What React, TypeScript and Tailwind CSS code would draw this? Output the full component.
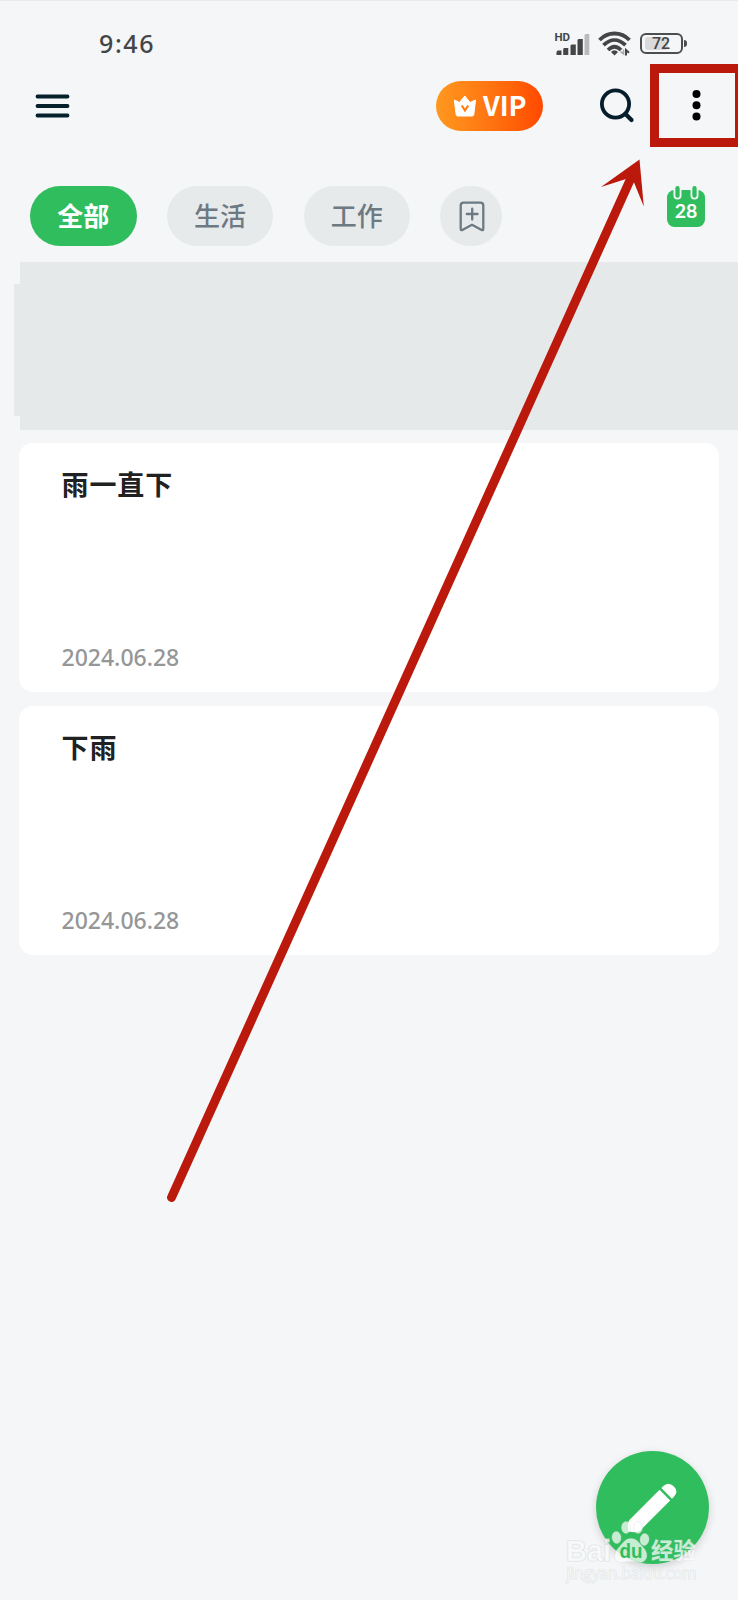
interface Note {
  title: string;
  date: string;
}

const notes: Note[] = [
  { title: '雨一直下', date: '2024.06.28' },
  { title: '下雨', date: '2024.06.28' },
];

const categories = ['全部', '生活', '工作'];

function StatusBar() {
  return (
    <div className="flex h-[64px] items-start justify-between border-t border-[#e8eaec] pl-[99px] pr-[51.5px] text-[#444546]">
      <span className="mt-[24px] text-[25px] font-medium leading-[36px] tracking-[1.6px]">9:46</span>
      <div className="mt-[29px] flex items-start">
        <svg width="36" height="26" viewBox="0 0 36 26" fill="currentColor">
          <text x="0.500" y="11" fontSize="11.5" fontWeight="700" fontFamily="Roboto">HD</text>
          <path d="M3.500 20.500h4V25h-5v-3zM10 18h4.300v7H9.200v-6zM17.500 14.500h4.300V25h-5.300v-9.500zM24.500 9h4.300v16h-5.300V10z" />
          <path d="M31.500 4h3.800v21h-4.800V5z" fill="#b9bbbd" />
        </svg>
        <svg width="34" height="26" viewBox="0 0 34 26" fill="none" stroke="currentColor" className="ml-[8px]">
          <path d="M1.500 10C10 1.300 23 1.300 31.500 10" strokeWidth="3.800" />
          <path d="M5.500 15.200C12.500 8.300 20.500 8.300 27.500 15.200" strokeWidth="3.800" />
          <path d="M10 20C14.500 15.500 18.500 15.500 23 20" strokeWidth="3.600" />
          <path d="M13 22Q16.500 18.700 20 22L16.500 25.500Z" fill="currentColor" stroke="none" />
          <path d="M25.500 19.500v4.500l-3-2.300" stroke="#a9abad" strokeWidth="1.600" />
          <path d="M28 25.500v-5.500l3 2.700" strokeWidth="2" />
        </svg>
        <div className="ml-[8px] mt-[3px] flex items-center">
          <div className="relative flex h-[21px] w-[43px] items-center justify-center rounded-[6px] border-2 border-[#4d4e50]">
            <div className="absolute inset-y-[2px] left-[3px] w-[23px] rounded-[3px] bg-[#d9dadb]" />
            <span className="relative font-[Roboto] text-[16px] font-medium leading-none">72</span>
          </div>
          <div className="ml-px h-[7px] w-[3px] rounded-r-sm bg-[#4d4e50]" />
        </div>
      </div>
    </div>
  );
}

function Toolbar() {
  return (
    <div className="flex h-[83px] items-center pl-[35px] pr-[37px]">
      <svg width="35" height="24" viewBox="0 0 35 24" stroke="#06202c" strokeWidth="3.800" strokeLinecap="round">
        <path d="M2.500 2.500h30M2.500 12h30M2.500 21.500h30" />
      </svg>
      <div className="ml-[366px] flex h-[50px] w-[107px] items-center rounded-full bg-linear-to-r from-[#ff981e] to-[#ff4800] pl-[17px]">
        <svg width="24" height="22" viewBox="0 0 24 22">
          <path d="M1.300 5L6.500 7.500L11.800 1L17 7.500L22.500 5L20.800 19.500Q20.600 21 19.100 21H4.900Q3.400 21 3.200 19.500Z" fill="#fff" stroke="#fff" strokeLinejoin="round" />
          <path d="M8.800 10.500L12 15.500L15.200 10.500" fill="none" stroke="#ff7c14" strokeWidth="2.200" />
        </svg>
        <span className="ml-[6px] pb-[3px] font-['Noto_Sans_CJK_SC'] text-[27px] font-bold leading-none text-white">VIP</span>
      </div>
      <svg width="37" height="36" viewBox="0 0 37 36" fill="none" stroke="#061d2b" strokeWidth="3.800" strokeLinecap="round" className="ml-[56px]">
        <circle cx="16.500" cy="16" r="13.600" />
        <path d="M26.500 26l6 6" strokeWidth="4.200" />
      </svg>
      <svg width="10" height="34" viewBox="0 0 10 34" className="ml-auto">
        <circle cx="5.500" cy="5" r="4" />
        <circle cx="5.500" cy="16.300" r="4" />
        <circle cx="5.500" cy="27.500" r="4" />
      </svg>
    </div>
  );
}

function Categories() {
  return (
    <div className="mt-[39px] flex h-[60px] items-start gap-[30.3px] pl-[30px] pr-[33px]">
      {categories.map((name, i) => (
        <div
          key={name}
          className={`flex h-[60px] w-[106.5px] items-center justify-center rounded-full pt-px text-[26px] ${
            i === 0 ? 'bg-[#30bd5e] font-bold text-white' : 'bg-[#e7eaeb] font-medium text-[#6d7983]'
          }`}
        >
          {name}
        </div>
      ))}
      <div className="flex h-[60px] w-[62px] items-center justify-center rounded-full bg-[#e7eaeb]">
        <svg width="26" height="31" viewBox="0 0 26 31" fill="none" stroke="#6d7983" strokeWidth="2.300" strokeLinecap="round" strokeLinejoin="round" className="ml-px">
          <path d="M4.500 1.700h17Q24.300 1.700 24.300 4.500v23.300Q24.300 30 22.200 28.800L13 23.800L3.800 28.800Q1.700 30 1.700 27.800V4.500Q1.700 1.700 4.500 1.700Z" />
          <path d="M7.800 13h10.800M13.200 7.700v10.800" />
        </svg>
      </div>
      <svg width="38" height="42" viewBox="0 0 38 42" className="ml-auto">
        <rect y="4" width="38" height="37" rx="7.500" fill="#30bd5e" />
        <path d="M10.500 1.500v8M27.500 1.500v8" stroke="#f4f6f8" strokeWidth="8" strokeLinecap="round" />
        <path d="M10.500 2.200v7.500M27.500 2.200v7.500" stroke="#30bd5e" strokeWidth="4.300" strokeLinecap="round" />
        <text x="19" y="32" textAnchor="middle" fontFamily="Lato" fontSize="19.500" fontWeight="700" fill="#fff">28</text>
      </svg>
    </div>
  );
}

function NoteCard({ title, date }: Note) {
  return (
    <div className="flex h-[249px] flex-col justify-between rounded-[14px] bg-white pb-[20px] pl-[42.5px] pt-[24px]">
      <div className="text-[27px] font-bold leading-[36px] tracking-[0.9px] text-[#202122]">{title}</div>
      <div className="text-[23px] font-medium leading-[30px] text-[#959697]">{date}</div>
    </div>
  );
}

function EditButton() {
  return (
    <div className="absolute left-[596px] top-[1451px] flex h-[113px] w-[113px] items-center justify-center rounded-full bg-[#30bd5e] shadow-[0_3px_9px_rgba(0,0,0,0.16)]">
      <svg width="113" height="113" viewBox="0 0 113 113">
        <g transform="translate(56.5 56.5) rotate(45)" fill="#fff">
          <path d="M-7.500-17.500H7.500V24.500Q7.500 28 4.500 30.500L0 34L-4.500 30.500Q-7.500 28-7.500 24.500Z" />
          <path d="M-7.500-20V-22.500Q-7.500-30 0-30Q7.500-30 7.500-22.500V-20Z" />
        </g>
      </svg>
    </div>
  );
}

function Watermark() {
  return (
    <svg width="142" height="70" viewBox="0 0 142 70" className="absolute left-[562px] top-[1518px]">
      <g fontFamily="'Liberation Sans', 'Noto Sans CJK SC', sans-serif" fontWeight="700">
        <g fill="#fafbfb" fillOpacity="0.75" stroke="#d3d6d8" strokeOpacity="0.7" strokeWidth="1.200" paintOrder="stroke">
          <text x="4" y="43" fontSize="29" textLength="45" lengthAdjust="spacingAndGlyphs">Bai</text>
          <text x="89" y="41" fontSize="22.500" textLength="45" strokeOpacity="0.2">经验</text>
          <text x="4.500" y="60.500" fontSize="16" fontWeight="400" fontFamily="'Open Sans', sans-serif" textLength="130" lengthAdjust="spacingAndGlyphs" strokeWidth="0.900">jingyan.baidu.com</text>
        </g>
        <g fill="#fff" fillOpacity="0.72" stroke="#d3d6d8" strokeOpacity="0.5" strokeWidth="0.700">
          <ellipse cx="54.500" cy="19.500" rx="4.500" ry="6" transform="rotate(-8 54.500 19.500)" />
          <ellipse cx="64" cy="9.500" rx="4.500" ry="6" />
          <ellipse cx="76" cy="9.500" rx="4.500" ry="6" />
          <ellipse cx="82.500" cy="21.500" rx="4.500" ry="6" transform="rotate(8 82.500 21.500)" />
          <path d="M69 20.500C75 20.500 77 25 80.500 28.500C87 35 86 43 79 44.500Q69 42.500 60 44.500C51 44.500 51 36 56 30.500C61 25 63 20.500 69 20.500Z" />
        </g>
        <text x="57.500" y="40" fontSize="19.500" textLength="23" lengthAdjust="spacingAndGlyphs" fill="#30bd5e">du</text>
      </g>
    </svg>
  );
}

export default function App() {
  return (
    <div className="relative h-[1600px] w-[738px] overflow-hidden bg-[#f4f6f8] font-['Noto_Sans','Noto_Sans_CJK_SC',sans-serif]">
      <StatusBar />
      <Toolbar />
      <Categories />

      {/* Covered banner */}
      <div className="mt-[16px] flex h-[168px] items-start">
        <div className="ml-[14px] mt-[22px] h-[132px] w-[6px] bg-[#e5e9ea]" />
        <div className="h-full flex-1 bg-[#e5e9ea]" />
      </div>

      <div className="mt-[13px] flex flex-col gap-[14px] px-[19px]">
        {notes.map((note) => (
          <NoteCard key={note.title} {...note} />
        ))}
      </div>

      <EditButton />
      <Watermark />

      {/* Menu highlight and pointer */}
      <div className="absolute left-[650px] top-[64px] h-[83px] w-[94px] border-[9px] border-[#bb190c]" />
      <svg width="738" height="1600" viewBox="0 0 738 1600" className="pointer-events-none absolute left-0 top-0">
        <path d="M171.500 1197.500L631 178" stroke="#bb190c" strokeWidth="9" strokeLinecap="round" />
        <path d="M639.500 159.500L601 187L626 179L634 182.500L643.800 206.500Z" fill="#bb190c" />
      </svg>
    </div>
  );
}
